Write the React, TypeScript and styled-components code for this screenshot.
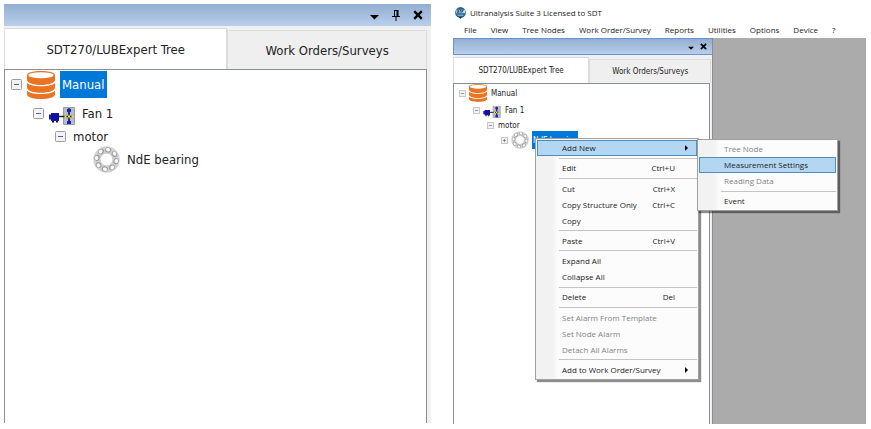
import React from 'react';
import styled, { createGlobalStyle, css } from 'styled-components';

const GlobalStyle = createGlobalStyle`
  * { box-sizing: border-box; }
  body { margin: 0; background: #fff; }
  button { font: inherit; color: inherit; background: none; border: 0; padding: 0; margin: 0; text-align: left; }
  ul { list-style: none; margin: 0; padding: 0; }
`;

const TREE_FONT = "'DejaVu Sans Condensed', 'DejaVu Sans', sans-serif";
const MENU_FONT = "'Open Sans', 'Noto Sans', sans-serif";

type Sized = { $small?: boolean };

const Page = styled.main`
  display: flex;
  gap: 22px;
  min-height: 100vh;
  padding: 0 5px 5px 4px;
  color: #222;
  font-family: ${TREE_FONT};
`;

const TreeWindow = styled.section`
  flex: 427 1 0;
  min-width: 0;
  display: flex;
  padding: 4px 0 1px;
`;

const AppWindow = styled.section`
  position: relative;
  flex: 413 1 0;
  min-width: 0;
  display: flex;
  flex-direction: column;
`;

const TitleBar = styled.header`
  display: flex;
  align-items: center;
  gap: 4px;
  height: 22px;
  padding: 3px 0 0 2px;
  font: 8px/12px ${MENU_FONT};
`;

const MenuBar = styled.nav`
  display: flex;
  align-items: center;
  gap: 14px;
  height: 16px;
  padding-left: 11px;
  font: 8px/12px ${MENU_FONT};
  white-space: nowrap;
`;

const Workspace = styled.div`
  flex: 1;
  display: flex;
  background: #ababab;
`;

const Dock = styled.div<Sized>`
  display: flex;
  flex-direction: column;
  min-width: 0;
  background: #f0f0f0;
  ${({ $small }) =>
    $small
      ? css`
          flex: 0 0 63%;
          border-right: 1px solid #8d8d8d;
          font-size: 8px;
        `
      : css`
          flex: 1;
          font-size: 13px;
        `}
`;

const DockHeader = styled.div<Sized>`
  display: flex;
  align-items: center;
  justify-content: flex-end;
  background: linear-gradient(#92aed0, #b9cfec);
  ${({ $small }) =>
    $small
      ? css`
          height: 17px;
          gap: 6px;
          padding-right: 5px;
          border: 1px solid #6c90d4;
          border-right: 0;
        `
      : css`
          height: 22px;
          gap: 13px;
          padding-right: 8px;
        `}
`;

const HeaderButton = styled.button`
  display: flex;
`;

const Tabs = styled.div<Sized>`
  display: flex;
  align-items: flex-end;
  height: ${({ $small }) => ($small ? 28 : 43)}px;
  padding-right: ${({ $small }) => ($small ? 1 : 4)}px;
`;

const Tab = styled.button<Sized & { $active?: boolean }>`
  flex: ${({ $active }) => ($active ? '224 1 0' : '200 1 0')};
  height: ${({ $small, $active }) => ($small ? ($active ? 26 : 24) : $active ? 41 : 39)}px;
  border: 1px solid #dcdcdf;
  border-bottom: 0;
  background: ${({ $active }) => ($active ? '#fff' : '#efefef')};
  text-align: center;
  white-space: nowrap;
`;

const TreeArea = styled.div<Sized>`
  flex: 1;
  margin-right: ${({ $small }) => ($small ? 2 : 4)}px;
  padding-top: ${({ $small }) => ($small ? 0 : 1)}px;
  border: 1px solid #8b8f9a;
  border-bottom: 0;
  background: #fff;
`;

type RowKind = 'root' | 'machine' | 'part' | 'sensor';
const rowHeights = {
  large: { root: 27, machine: 30, part: 16, sensor: 30 },
  small: { root: 18, machine: 17, part: 12, sensor: 18 },
};
const rowDepth = { root: 0, machine: 1, part: 2, sensor: 3 };

const Row = styled.li<Sized & { $kind: RowKind }>`
  display: flex;
  align-items: center;
  height: ${({ $small, $kind }) => rowHeights[$small ? 'small' : 'large'][$kind]}px;
  gap: ${({ $small }) => ($small ? 3 : 5)}px;
  padding-left: ${({ $small, $kind }) => ($small ? 5 + 14 * rowDepth[$kind] : 6 + 22 * rowDepth[$kind])}px;
`;

const Toggle = styled.button<Sized>`
  display: flex;
  flex: none;
  width: ${({ $small }) => ($small ? 7 : 11)}px;
`;

const NodeLabel = styled.span<Sized & { $selected?: boolean }>`
  align-self: stretch;
  display: flex;
  align-items: center;
  padding: 0 ${({ $small }) => ($small ? 1 : 2)}px;
  white-space: nowrap;
  ${({ $selected }) => $selected && 'background: #0078d7; color: #fff;'}
`;

const Menu = styled.div`
  position: absolute;
  display: flex;
  flex-direction: column;
  padding: 1px;
  border: 1px solid #a0a0a0;
  background: linear-gradient(90deg, #f2f2f2 16px, #fcfcfc 22px);
  box-shadow: 2px 2px 1px #00000073;
  font: 8px/12px ${MENU_FONT};
`;

const ContextMenu = styled(Menu)`
  top: 138px;
  left: 82px;
  width: 164px;
  height: 242px;
`;

const SubMenu = styled(Menu)`
  top: 139px;
  left: 244px;
  width: 141px;
  height: 72px;
`;

const MenuItem = styled.button<{ $active?: boolean }>`
  display: flex;
  align-items: center;
  flex: none;
  height: 16px;
  padding: 0 8px 0 24px;
  border: 1px solid ${({ $active }) => ($active ? '#4f8fb8' : 'transparent')};
  ${({ $active }) => $active && 'background: #b3d7f3;'}
  white-space: nowrap;
  &:disabled { color: #838383; }
`;

const Shortcut = styled.span`
  margin-left: auto;
  padding-right: 13px;
`;

const SubArrow = styled.svg`
  margin-left: auto;
`;

const Separator = styled.div`
  flex: 1;
  display: flex;
  align-items: center;
  padding-left: 22px;
  &::before { content: ''; flex: 1; height: 1px; background: #c4c4c4; }
`;

const DatabaseIcon = ({ size }: { size: number }) => (
  <svg width={size} height={size} viewBox="0 0 28 28">
    <path d="M0 19.400v4.100c0 2.600 6 4.500 14 4.500s14-1.900 14-4.500v-4.100c-1.500 2.200-7 3.600-14 3.600s-12.500-1.400-14-3.600z" fill="#e87424" />
    <path d="M0 11.700v5c0 2.800 6 5 14 5s14-2.200 14-5v-5c-1.500 2.200-7 3.600-14 3.600s-12.500-1.400-14-3.600z" fill="#e87424" />
    <path d="M0 4v5c0 2.800 6 5 14 5s14-2.200 14-5v-5c0-2.400-6-4-14-4s-14 1.600-14 4z" fill="#e87424" />
    <ellipse cx="14" cy="4.200" rx="12.600" ry="3" fill="#fff" />
  </svg>
);

const FanDrawing = styled.svg<Sized>`
  flex: none;
  margin-top: ${({ $small }) => ($small ? 3 : 6)}px;
`;

const FanIcon = ({ small }: { small?: boolean }) => (
  <FanDrawing $small={small} width={small ? 18 : 26} height={small ? 12 : 18} viewBox="0 0 26 18">
    <path d="M14.500.5h11v17h-11z" fill="#b9bcc4" stroke="#9a9da6" />
    <path d="M2 6h8v8H2zM0 7.500h2v5H0z" fill="#1818b8" />
    <path d="M2 8h8M2 10h8M2 12h8" stroke="#060670" strokeWidth=".8" />
    <path d="M3 14h2v1.500H3zM7 14h2v1.500H7z" fill="#060670" />
    <path d="M10 9.500h14" stroke="#222" strokeWidth="1.500" />
    <path d="M20 1v16" stroke="#111" strokeWidth="1.200" />
    <path d="M18 2h4v3h-1v2h-2V5h-1zM18 17h4v-3h-1v-2h-2v2h-1z" fill="#1626a8" />
    <path d="M15.500 8.500h2v2h-2zM22.500 8.500h2v2h-2zM19 8.500h2v2h-2z" fill="#f3e52b" />
  </FanDrawing>
);

const BearingIcon = ({ size }: { size: number }) => (
  <svg width={size} height={size} viewBox="0 0 28 28">
    <circle cx="14" cy="14" r="10.200" fill="none" stroke="#d2d2d2" strokeWidth="7" />
    <circle cx="14" cy="14" r="6.600" fill="#fff" stroke="#bdbdbd" strokeWidth=".8" />
    {[10, 55, 100, 145, 190, 235, 280, 325].map((angle) => (
      <g key={angle} transform={`rotate(${angle} 14 14)`}>
        <ellipse cx="14" cy="4" rx="3.200" ry="2.700" fill="#9a9a9a" />
        <ellipse cx="13.800" cy="3.700" rx="2.200" ry="1.800" fill="#fafafa" />
      </g>
    ))}
  </svg>
);

const ToggleIcon = ({ size, plus }: { size: number; plus?: boolean }) => (
  <svg width={size} height={size} viewBox="0 0 11 11">
    <rect x=".5" y=".5" width="10" height="10" rx="1" fill="#f3f3f3" stroke="#9c9c9c" />
    <path d={plus ? 'M3 5.500h5M5.500 3v5' : 'M3 5.500h5'} stroke="#4a5fae" />
  </svg>
);

const CaretIcon = ({ small }: { small?: boolean }) => (
  <svg width={small ? 6 : 9} height={small ? 6 : 9} viewBox="0 0 9 9">
    <path d="M0 4h9L4.500 8.500z" fill="#000" />
  </svg>
);

const PinIcon = () => (
  <svg width="8" height="11" viewBox="0 0 8 11">
    <path d="M2 .5h4M2.500 0v6M0 6.500h8M4 7v4" fill="none" stroke="#000" />
    <path d="M4.500 0h2v6h-2z" fill="#000" />
  </svg>
);

const CloseIcon = ({ size }: { size: number }) => (
  <svg width={size} height={size} viewBox="0 0 10 10">
    <path d="M1.200 1.200l7.600 7.600M8.800 1.200L1.200 8.800" stroke="#000" strokeWidth="2.400" />
  </svg>
);

const AppLogo = () => (
  <svg width="11" height="12" viewBox="0 0 11 12">
    <circle cx="5.500" cy="5.500" r="5.400" fill="#24658f" />
    <path d="M.8 2.800h9.400v3.400H.8z" fill="#c9dfeb" />
    <path d="M2.200 3v2.500h1.300V3M5 5.800V3.400h1.300v2.400M7.600 5.500V3.200h1.200" fill="none" stroke="#143f60" strokeWidth=".8" />
    <path d="M2.500 8.200h6" stroke="#9cc4da" />
    <path d="M4 10h3l-1.500 2z" fill="#143f60" />
  </svg>
);

const nodes: { kind: RowKind; label: string }[] = [
  { kind: 'root', label: 'Manual' },
  { kind: 'machine', label: 'Fan 1' },
  { kind: 'part', label: 'motor' },
  { kind: 'sensor', label: 'NdE bearing' },
];

const NodeIcon = ({ kind, small }: { kind: RowKind; small?: boolean }) => {
  if (kind === 'root') return <DatabaseIcon size={small ? 18 : 28} />;
  if (kind === 'machine') return <FanIcon small={small} />;
  if (kind === 'sensor') return <BearingIcon size={small ? 18 : 27} />;
  return null;
};

const ToggleSpace = styled.span<Sized>`
  flex: none;
  width: ${({ $small }) => ($small ? 7 : 11)}px;
`;

function DockPanel({ small, selected }: { small?: boolean; selected: RowKind }) {
  return (
    <Dock $small={small}>
      <DockHeader $small={small}>
        <HeaderButton aria-label="Window options"><CaretIcon small={small} /></HeaderButton>
        {!small && <HeaderButton aria-label="Pin"><PinIcon /></HeaderButton>}
        <HeaderButton aria-label="Close"><CloseIcon size={small ? 7 : 10} /></HeaderButton>
      </DockHeader>
      <Tabs $small={small} role="tablist">
        <Tab $small={small} $active role="tab" aria-selected>SDT270/LUBExpert Tree</Tab>
        <Tab $small={small} role="tab" aria-selected={false}>Work Orders/Surveys</Tab>
      </Tabs>
      <TreeArea $small={small}>
        <ul>
          {nodes.map(({ kind, label }) => (
            <Row key={kind} $small={small} $kind={kind}>
              {kind === 'sensor' && !small ? (
                <ToggleSpace />
              ) : (
                <Toggle $small={small} aria-label={`Toggle ${label}`}>
                  <ToggleIcon size={small ? 7 : 11} plus={kind === 'sensor'} />
                </Toggle>
              )}
              <NodeIcon kind={kind} small={small} />
              <NodeLabel $small={small} $selected={kind === selected}>{label}</NodeLabel>
            </Row>
          ))}
        </ul>
      </TreeArea>
    </Dock>
  );
}

type Entry = { label: string; keys?: string; sub?: boolean; active?: boolean; disabled?: boolean } | null;

const contextEntries: Entry[] = [
  { label: 'Add New', sub: true, active: true },
  null,
  { label: 'Edit', keys: 'Ctrl+U' },
  null,
  { label: 'Cut', keys: 'Ctrl+X' },
  { label: 'Copy Structure Only', keys: 'Ctrl+C' },
  { label: 'Copy' },
  null,
  { label: 'Paste', keys: 'Ctrl+V' },
  null,
  { label: 'Expand All' },
  { label: 'Collapse All' },
  null,
  { label: 'Delete', keys: 'Del' },
  null,
  { label: 'Set Alarm From Template', disabled: true },
  { label: 'Set Node Alarm', disabled: true },
  { label: 'Detach All Alarms', disabled: true },
  null,
  { label: 'Add to Work Order/Survey', sub: true },
];

const subEntries: Entry[] = [
  { label: 'Tree Node', disabled: true },
  { label: 'Measurement Settings', active: true },
  { label: 'Reading Data', disabled: true },
  null,
  { label: 'Event' },
];

const MenuEntries = ({ entries }: { entries: Entry[] }) => (
  <>
    {entries.map((entry, i) =>
      entry ? (
        <MenuItem key={entry.label} role="menuitem" $active={entry.active} disabled={entry.disabled}>
          {entry.label}
          {entry.keys && <Shortcut>{entry.keys}</Shortcut>}
          {entry.sub && (
            <SubArrow width="3" height="6" viewBox="0 0 3 6"><path d="M0 0l3 3-3 3z" fill="#000" /></SubArrow>
          )}
        </MenuItem>
      ) : (
        <Separator key={`separator-${i}`} role="separator" />
      ),
    )}
  </>
);

const menuTitles = ['File', 'View', 'Tree Nodes', 'Work Order/Survey', 'Reports', 'Utilities', 'Options', 'Device', '?'];

export default function App() {
  return (
    <>
      <GlobalStyle />
      <Page>
        <TreeWindow>
          <DockPanel selected="root" />
        </TreeWindow>
        <AppWindow>
          <TitleBar><AppLogo />Ultranalysis Suite 3 Licensed to SDT</TitleBar>
          <MenuBar>{menuTitles.map((title) => <button key={title}>{title}</button>)}</MenuBar>
          <Workspace><DockPanel small selected="sensor" /></Workspace>
          <ContextMenu role="menu"><MenuEntries entries={contextEntries} /></ContextMenu>
          <SubMenu role="menu"><MenuEntries entries={subEntries} /></SubMenu>
        </AppWindow>
      </Page>
    </>
  );
}
